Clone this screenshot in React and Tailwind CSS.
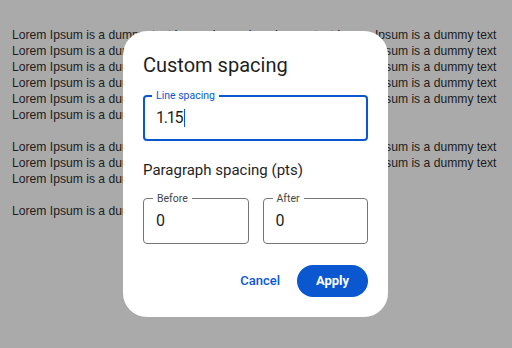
const LINE = "Lorem Ipsum is a dummy text";

const repeat = (n) => Array.from({ length: n }, () => LINE).join(" ");

const OutlinedField = ({ label, value, focused, className }) => (
  <div
    className={`relative h-[46px] rounded-[4px] ${
      focused ? "border-2 border-[#0b57d0]" : "border border-[#747775]"
    } ${className || ""}`}
  >
    <span
      className={`absolute ${
        focused ? "-top-[8px] left-[7px] text-[#0b57d0]" : "-top-[7px] left-[9px] text-[#444746]"
      } bg-white px-[4px] text-[10.5px] leading-[13px]`}
    >
      {label}
    </span>
    <div
      className={`flex h-full items-center ${
        focused ? "pl-[11px] tracking-[-1.2px]" : "pl-[12px]"
      } text-[16px] text-[#1f1f1f]`}
    >
      {value}
      {focused && <span className="ml-[2px] inline-block h-[18px] w-[1px] bg-[#0b57d0]" />}
    </div>
  </div>
);

export default function App() {
  return (
    <div className="relative h-[348px] w-[512px] overflow-hidden bg-[#aaaaaa] font-['Liberation_Sans',Arial,sans-serif]">
      {/* page behind the dialog */}
      <div className="flex flex-col gap-[16px] pl-[12px] pr-[10px] pt-[27px] text-[12.15px] leading-[16px] text-[#1c1c1c]">
        <p>{repeat(16)}</p>
        <p>{repeat(7)}</p>
        <p>{repeat(1)}</p>
      </div>

      {/* dialog */}
      <div className="absolute inset-0 flex items-center justify-center">
        <div className="-ml-[1px] flex h-[286px] w-[265px] flex-col rounded-[24px] bg-white px-[20px] pt-[20px] font-['Roboto',sans-serif]">
          <h2 className="text-[20px] leading-[28px] text-[#1f1f1f]">Custom spacing</h2>

          <OutlinedField label="Line spacing" value="1.15" focused className="mt-[16px]" />

          <p className="mt-[19px] text-[15px] leading-[20px] text-[#1f1f1f]">Paragraph spacing (pts)</p>

          <div className="mt-[18px] grid grid-cols-2 gap-[14px]">
            <OutlinedField label="Before" value="0" />
            <OutlinedField label="After" value="0" />
          </div>

          <div className="mt-[21px] flex items-center justify-end gap-[17px]">
            <button className="text-[13px] font-medium text-[#0b57d0]">Cancel</button>
            <button className="h-[32px] w-[71px] rounded-full bg-[#0b57d0] text-[13px] font-bold text-white">
              Apply
            </button>
          </div>
        </div>
      </div>
    </div>
  );
}
